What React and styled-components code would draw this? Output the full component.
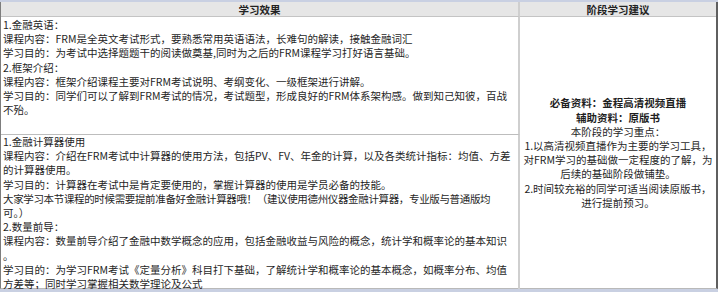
import React from 'react';
import styled, { createGlobalStyle } from 'styled-components';

const GlobalStyle = createGlobalStyle`
  html, body {
    margin: 0;
    padding: 0;
    background: #ffffff;
  }
  body {
    font-family: "Noto Sans CJK SC", "Noto Sans", sans-serif;
    color: #1f1f1f;
  }
`;

const Frame = styled.div`
  width: 718px;
  height: 292px;
  box-sizing: border-box;
  overflow: hidden;
  border-top: 2px solid #c9d0e2;
  border-bottom: 3px solid #c9d0e2;
  background: #fff;
`;

const Sheet = styled.div`
  display: grid;
  grid-template-columns: 519px 1fr;
  grid-template-rows: 15px 118px 1fr;
  height: 100%;
  box-sizing: border-box;
  border-left: 1px solid #7d7d7d;
  border-right: 2px solid #5f5f5f;
  border-bottom: 1px solid #b9b9b9;
  font-size: 10.5px;
  line-height: 14.2px;
`;

const HeadCell = styled.div`
  background: #e6e6e6;
  border-bottom: 1px solid #c4c4c4;
  border-right: ${({ last }) => (last ? 'none' : '2px solid #cfcfcf')};
  font-weight: 700;
  text-align: center;
  line-height: 15px;
  color: #222;
`;

const Cell = styled.div`
  border-right: 2px solid #cfcfcf;
  border-bottom: ${({ last }) => (last ? 'none' : '1px solid #bdbdbd')};
  padding: ${({ top }) => top || '1px'} 0 0 2px;
  white-space: pre;
  min-width: 0;
`;

const SideCell = styled.div`
  grid-column: 2;
  grid-row: 2 / 4;
  display: flex;
  flex-direction: column;
  justify-content: center;
  align-items: center;
  text-align: center;
  white-space: pre;
  padding-bottom: 2px;
`;

const Strong = styled.div`
  font-weight: 700;
`;

const Tight = styled.span`
  letter-spacing: -0.35px;
`;

const english = `1.金融英语：
课程内容：FRM是全英文考试形式，要熟悉常用英语语法，长难句的解读，接触金融词汇
学习目的：为考试中选择题题干的阅读做奠基,同时为之后的FRM课程学习打好语言基础。
2.框架介绍：
课程内容：框架介绍课程主要对FRM考试说明、考纲变化、一级框架进行讲解。
学习目的：同学们可以了解到FRM考试的情况，考试题型，形成良好的FRM体系架构感。做到知己知彼，百战
不殆。`;

const calcTop = `1.金融计算器使用
课程内容：介绍在FRM考试中计算器的使用方法，包括PV、FV、年金的计算，以及各类统计指标：均值、方差
的计算器使用。
学习目的：计算器在考试中是肯定要使用的，掌握计算器的使用是学员必备的技能。
`;

const calcTip = `大家学习本节课程的时候需要提前准备好金融计算器哦！（建议使用德州仪器金融计算器，专业版与普通版均`;

const calcRest = `
可。）
2.数量前导：
课程内容：数量前导介绍了金融中数学概念的应用，包括金融收益与风险的概念，统计学和概率论的基本知识
。
学习目的：为学习FRM考试《定量分析》科目打下基础，了解统计学和概率论的基本概念，如概率分布、均值
方差等；同时学习掌握相关数学理论及公式`;

const advice = `本阶段的学习重点：
1.以高清视频直播作为主要的学习工具，
对FRM学习的基础做一定程度的了解，为
后续的基础阶段做铺垫。
2.时间较充裕的同学可适当阅读原版书，
进行提前预习。`;

export default function App() {
  return (
    <>
      <GlobalStyle />
      <Frame>
        <Sheet>
          <HeadCell>学习效果</HeadCell>
          <HeadCell last>阶段学习建议</HeadCell>
          <Cell>{english}</Cell>
          <SideCell>
            <Strong>必备资料：金程高清视频直播</Strong>
            <Strong>辅助资料：原版书</Strong>
            {advice}
          </SideCell>
          <Cell last top="0px">
            {calcTop}
            <Tight>{calcTip}</Tight>
            {calcRest}
          </Cell>
        </Sheet>
      </Frame>
    </>
  );
}
